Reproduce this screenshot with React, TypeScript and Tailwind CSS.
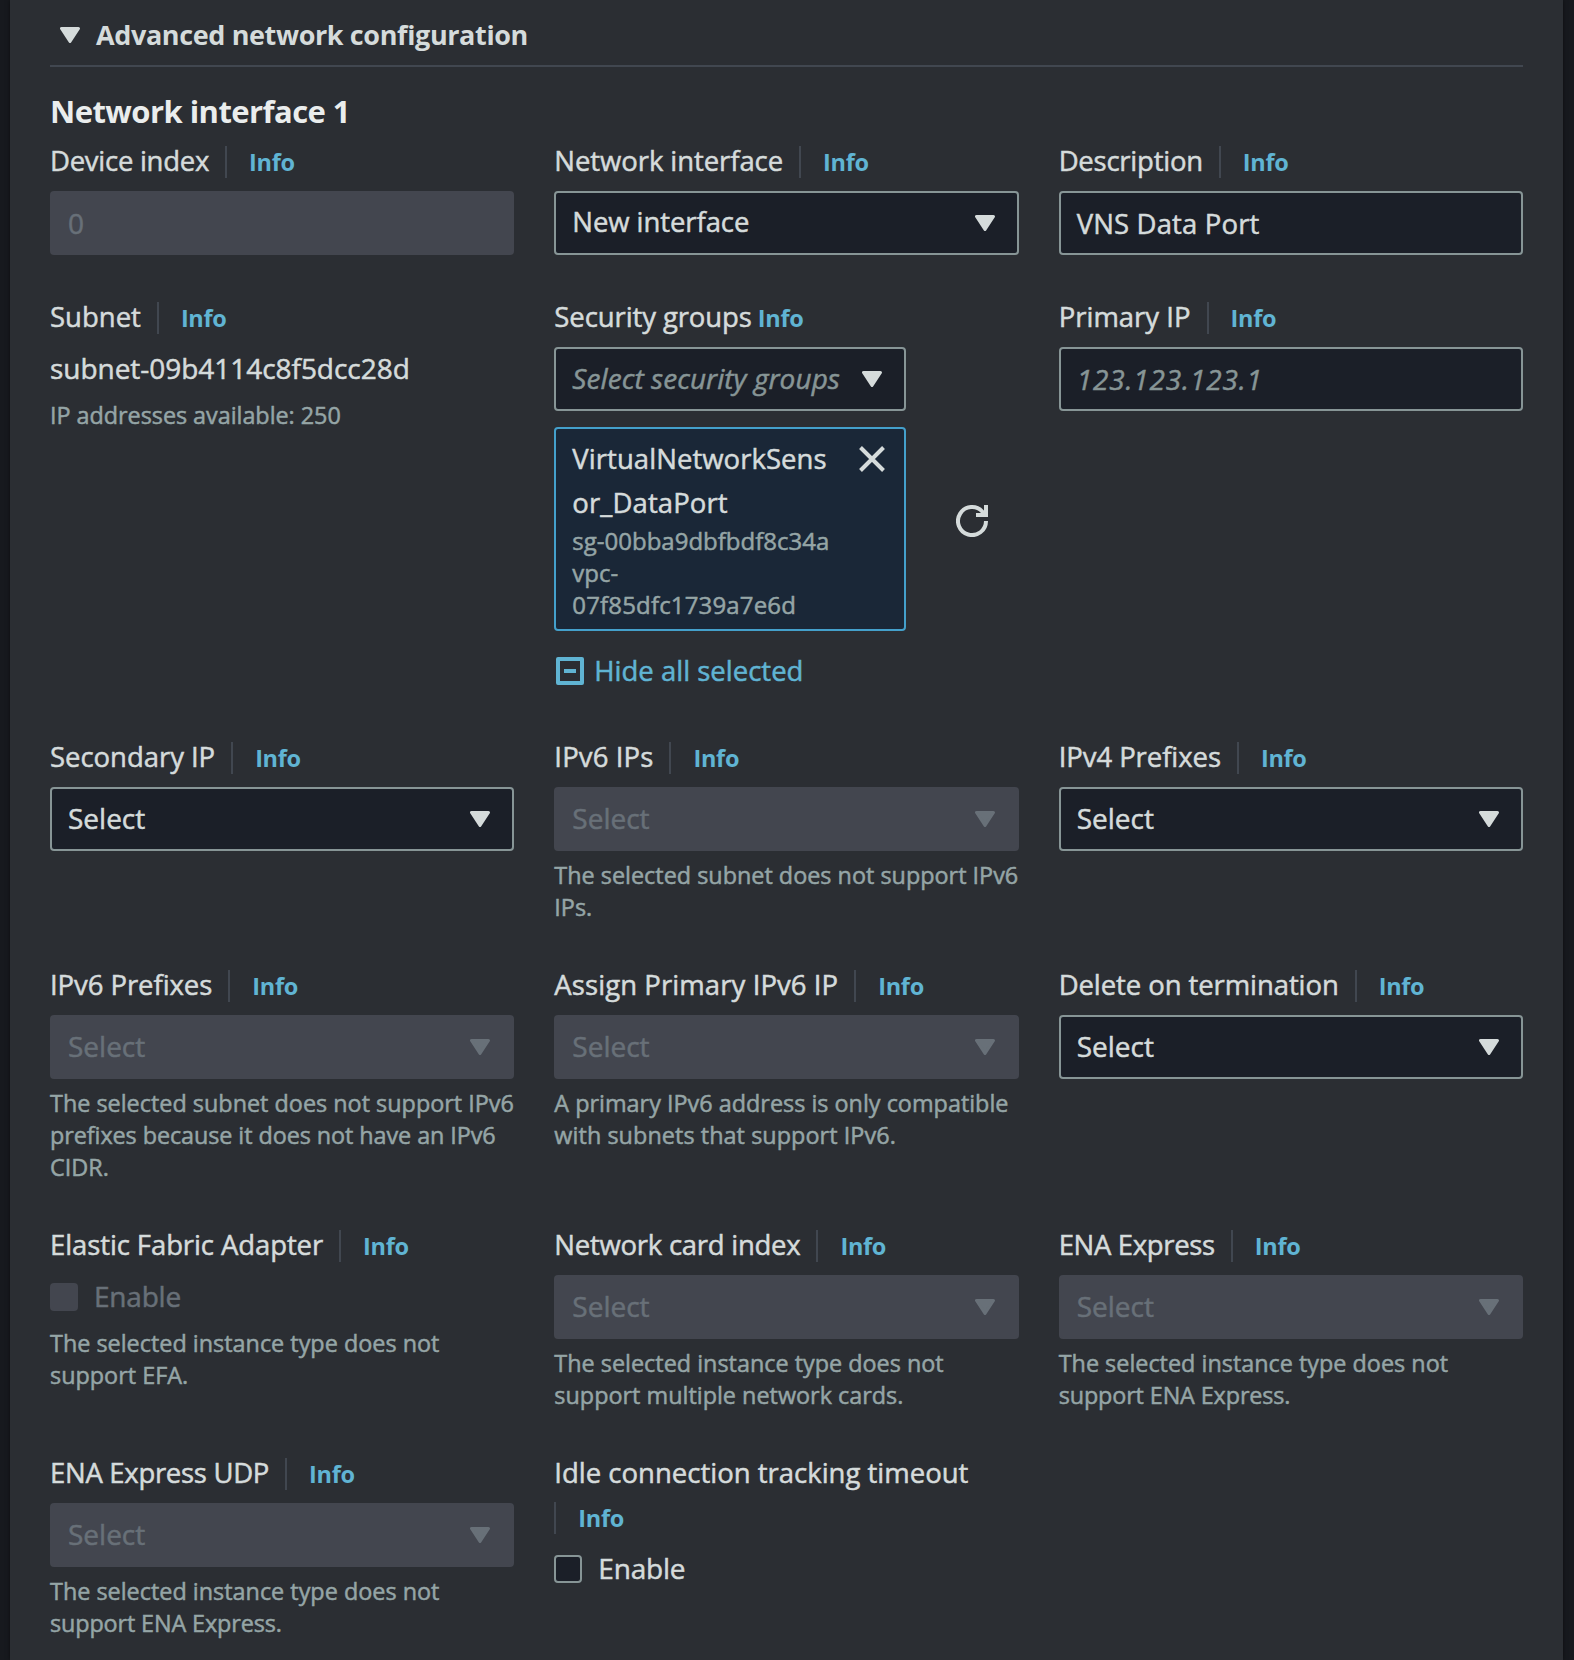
import React from "react";

function Caret({ className }: { className: string }) {
  return (
    <svg width="20" height="16" viewBox="0 0 20 16" className={`shrink-0 ${className}`}>
      <path
        d="M1.5 1.5h17L10 14.5z"
        fill="currentColor"
        stroke="currentColor"
        strokeWidth="3"
        strokeLinejoin="round"
      />
    </svg>
  );
}

function InfoLink() {
  return (
    <a className="pt-[2px] text-[23.5px] font-bold tracking-[-0.3px] text-[#60b4d3] [-webkit-text-stroke:0px]">
      Info
    </a>
  );
}

function Label({ text, className = "" }: { text: string; className?: string }) {
  return (
    <div className="mb-[7px] flex min-h-11 flex-wrap items-center">
      <span className={`mr-4 pb-[3px] leading-[41px] whitespace-nowrap ${className}`}>{text}</span>
      <span className="flex h-11 items-center">
        <span className="flex h-8 items-center border-l-2 border-[#414750] pl-[22px]">
          <InfoLink />
        </span>
      </span>
    </div>
  );
}

function Select({
  text = "Select",
  disabled = false,
  className = "text-[28px]",
}: {
  text?: string;
  disabled?: boolean;
  className?: string;
}) {
  return (
    <div
      className={`flex h-16 items-center justify-between rounded-[4px] border-2 pr-[22px] pl-4 ${
        disabled
          ? "border-[#43464f] bg-[#43464f] text-[#687078]"
          : "border-[#879596] bg-[#1b1f28] text-[#d5dbdb]"
      }`}
    >
      <span className={`pb-[2px] whitespace-nowrap ${className}`}>{text}</span>
      <Caret className={disabled ? "text-[#687078]" : "text-[#d5dbdb]"} />
    </div>
  );
}

function Helper({ children }: { children: React.ReactNode }) {
  return <p className="mt-2 text-[23.4px] leading-8 text-[#95a5a6]">{children}</p>;
}

export default function App() {
  return (
    <div
      lang="en"
      className="flex h-[1660px] w-[1574px] overflow-hidden bg-[#17191e] pr-[11px] pl-[10px] font-['Open_Sans',sans-serif] text-[27.5px] text-[#d5dbdb] [-webkit-text-stroke:0.5px]"
    >
      <main className="w-full bg-[#2b2e33] px-10 shadow-[0_0_4px_rgba(0,0,0,0.5)]">
        <div className="flex h-[67px] items-center gap-4 border-b-2 border-[#414750] pb-0 pl-[10px]">
          <Caret className="mt-[5px] text-[#d5dbdb]" />
          <h2 className="mt-[5px] text-[27px] font-bold tracking-[-0.38px] [-webkit-text-stroke:0px]">
            Advanced network configuration
          </h2>
        </div>
        <h3 className="mt-[22px] mb-[7px] text-[31px] leading-[44px] font-bold tracking-[-0.55px] text-[#eaeded] [-webkit-text-stroke:0px]">
          Network interface 1
        </h3>

        <div className="grid grid-cols-3 gap-x-10 gap-y-[41px]">
          <div>
            <Label text="Device index" className="tracking-[-0.27px]" />
            <div className="flex h-16 items-center rounded-[4px] bg-[#43464f] px-[18px] text-[28px] text-[#687078]">
              0
            </div>
          </div>
          <div>
            <Label text="Network interface" className="tracking-[-0.08px]" />
            <Select text="New interface" className="text-[27.5px] tracking-[-0.08px]" />
          </div>
          <div>
            <Label text="Description" className="tracking-[-0.24px]" />
            <div className="flex h-16 items-center rounded-[4px] border-2 border-[#879596] bg-[#1b1f28] px-4 pt-px tracking-[0.15px]">
              VNS Data Port
            </div>
          </div>

          <div>
            <Label text="Subnet" />
            <div className="pb-px text-[28px] leading-[43px] tracking-[-0.04px]">
              subnet-09b4114c8f5dcc28d
            </div>
            <div className="mt-2 text-[23.4px] leading-8 tracking-[-0.04px] text-[#95a5a6]">
              IP addresses available: 250
            </div>
          </div>
          <div>
            <div className="mb-[7px] flex h-11 items-center gap-[6px]">
              <span className="pb-[3px] tracking-[-0.1px]">Security groups</span>
              <InfoLink />
            </div>
            <div className="flex items-center">
              <div className="w-[352px]">
                <Select
                  text="Select security groups"
                  className="text-[28px] tracking-[0.06px] text-[#879596] italic"
                />
                <div className="mt-4 flex h-[204px] justify-between rounded-[4px] border-2 border-[#44a0cb] bg-[#1a2737] pt-2 pr-[19px] pl-4">
                  <div>
                    <div className="leading-[44px] tracking-[0.05px]">
                      VirtualNetworkSens
                      <br />
                      <span className="tracking-[0.1px]">or_DataPort</span>
                    </div>
                    <div className="text-[24px] leading-8 text-[#95a5a6]">
                      sg-00bba9dbfbdf8c34a
                      <br />
                      vpc-
                      <br />
                      <span className="tracking-[0.16px]">07f85dfc1739a7e6d</span>
                    </div>
                  </div>
                  <svg width="26" height="26" viewBox="0 0 26 26" className="mt-[9px] shrink-0">
                    <path d="M1.5 1.5l23 23M24.5 1.5l-23 23" stroke="#d5dbdb" strokeWidth="4" />
                  </svg>
                </div>
                <div className="mt-5 flex h-11 items-center gap-[10px] pb-1 pl-[2px] text-[#60b4d3]">
                  <svg width="28" height="28" viewBox="0 0 28 28" fill="none">
                    <rect
                      x="2"
                      y="2"
                      width="24"
                      height="24"
                      stroke="currentColor"
                      strokeWidth="4"
                      strokeLinejoin="round"
                    />
                    <path d="M8 14h12" stroke="currentColor" strokeWidth="4" />
                  </svg>
                  <span className="whitespace-nowrap">Hide all selected</span>
                </div>
              </div>
              <svg
                width="32"
                height="32"
                viewBox="0 0 32 32"
                fill="none"
                stroke="#d5dbdb"
                strokeWidth="4"
                className="ml-[50px]"
              >
                <path d="M30 16A14 14 0 1 1 26.5 6.8L29 9.5" />
                <path d="M30 0v10H20" />
              </svg>
            </div>
          </div>
          <div>
            <Label text="Primary IP" />
            <div className="flex h-16 items-center rounded-[4px] border-2 border-[#879596] bg-[#1b1f28] px-4 text-[28px] tracking-[0.84px] text-[#879596] italic">
              123.123.123.1
            </div>
          </div>

          <div>
            <Label text="Secondary IP" className="tracking-[-0.04px]" />
            <Select />
          </div>
          <div>
            <Label text="IPv6 IPs" className="tracking-[0.12px]" />
            <Select disabled />
            <Helper>
              The selected subnet does not support IPv6
              <br />
              IPs.
            </Helper>
          </div>
          <div>
            <Label text="IPv4 Prefixes" className="tracking-[-0.07px]" />
            <Select />
          </div>

          <div>
            <Label text="IPv6 Prefixes" className="tracking-[-0.07px]" />
            <Select disabled />
            <Helper>
              The selected subnet does not support IPv6
              <br />
              <span className="tracking-[-0.08px]">prefixes because it does not have an IPv6</span>
              <br />
              CIDR.
            </Helper>
          </div>
          <div>
            <Label text="Assign Primary IPv6 IP" className="tracking-[0.08px]" />
            <Select disabled />
            <Helper>
              A primary IPv6 address is only compatible
              <br />
              <span className="tracking-[0.06px]">with subnets that support IPv6.</span>
            </Helper>
          </div>
          <div>
            <Label text="Delete on termination" className="tracking-[-0.09px]" />
            <Select />
          </div>

          <div>
            <Label text="Elastic Fabric Adapter" className="tracking-[-0.1px]" />
            <div className="flex h-11 items-center gap-4 text-[28px] tracking-[-0.2px] text-[#687078]">
              <span className="size-7 rounded-[4px] bg-[#43464f]" />
              <span className="pb-[2px]">Enable</span>
            </div>
            <Helper>
              The selected instance type does not
              <br />
              support EFA.
            </Helper>
          </div>
          <div>
            <Label text="Network card index" className="tracking-[-0.26px]" />
            <Select disabled />
            <Helper>
              The selected instance type does not
              <br />
              support multiple network cards.
            </Helper>
          </div>
          <div>
            <Label text="ENA Express" className="tracking-[-0.34px]" />
            <Select disabled />
            <Helper>
              The selected instance type does not
              <br />
              <span className="tracking-[-0.13px]">support ENA Express.</span>
            </Helper>
          </div>

          <div>
            <Label text="ENA Express UDP" className="tracking-[-0.3px]" />
            <Select disabled />
            <Helper>
              The selected instance type does not
              <br />
              <span className="tracking-[-0.13px]">support ENA Express.</span>
            </Helper>
          </div>
          <div>
            <Label text="Idle connection tracking timeout" />
            <div className="flex h-11 items-center gap-4 text-[28px] tracking-[-0.2px]">
              <span className="size-7 rounded-[4px] border-2 border-[#879596] bg-[#1b1f28]" />
              <span className="pb-[2px]">Enable</span>
            </div>
          </div>
        </div>
      </main>
    </div>
  );
}
